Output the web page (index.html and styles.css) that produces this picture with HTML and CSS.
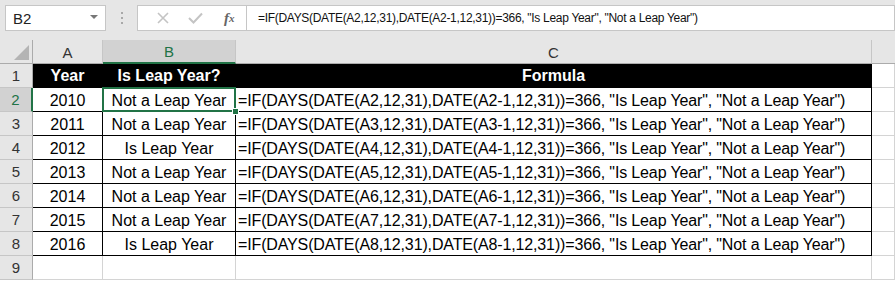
FILE: index.html
```html
<!DOCTYPE html>
<html lang="en">
<head>
    <meta charset="UTF-8">
    <title>Leap Year - Excel</title>
    <link rel="stylesheet" href="styles.css">
</head>
<body>

    <div class="toolbar">
        <div class="namebox">
            <span>B2</span>
            <span class="caret"></span>
        </div>
        <div class="grip"><i></i><i></i><i></i></div>
        <div class="fxbox">
            <span class="btn">
                <svg width="12" height="12" viewBox="0 0 12 12"><path d="M1 1 L11 11 M11 1 L1 11" stroke="#c4c4c4" stroke-width="1.6" fill="none"/></svg>
            </span>
            <span class="btn">
                <svg width="15" height="12" viewBox="0 0 15 12"><path d="M1 6 L5.5 10.5 L14 1.5" stroke="#c4c4c4" stroke-width="2" fill="none"/></svg>
            </span>
            <span class="btn fx"><i>f</i><small>x</small></span>
        </div>
        <div class="formula">=IF(DAYS(DATE(A2,12,31),DATE(A2-1,12,31))=366, "Is Leap Year", "Not a Leap Year")</div>
    </div>

    <div class="sheet">
        <!-- column headers -->
        <div class="corner"><span class="tri"></span></div>
        <div class="colhd">A</div>
        <div class="colhd active">B</div>
        <div class="colhd">C</div>
        <div class="colhd last"></div>

        <!-- row 1 -->
        <div class="rowhd">1</div>
        <div class="cell head">Year</div>
        <div class="cell head">Is Leap Year?</div>
        <div class="cell head">Formula</div>
        <div class="cell blank"></div>

        <div class="rowhd active">2</div>
        <div class="cell t">2010</div>
        <div class="cell t selected">Not a Leap Year<span class="handle"></span></div>
        <div class="cell t left">=IF(DAYS(DATE(A2,12,31),DATE(A2-1,12,31))=366, "Is Leap Year", "Not a Leap Year")</div>
        <div class="cell blank"></div>

        <div class="rowhd">3</div>
        <div class="cell t">2011</div>
        <div class="cell t">Not a Leap Year</div>
        <div class="cell t left">=IF(DAYS(DATE(A3,12,31),DATE(A3-1,12,31))=366, "Is Leap Year", "Not a Leap Year")</div>
        <div class="cell blank"></div>

        <div class="rowhd">4</div>
        <div class="cell t">2012</div>
        <div class="cell t">Is Leap Year</div>
        <div class="cell t left">=IF(DAYS(DATE(A4,12,31),DATE(A4-1,12,31))=366, "Is Leap Year", "Not a Leap Year")</div>
        <div class="cell blank"></div>

        <div class="rowhd">5</div>
        <div class="cell t">2013</div>
        <div class="cell t">Not a Leap Year</div>
        <div class="cell t left">=IF(DAYS(DATE(A5,12,31),DATE(A5-1,12,31))=366, "Is Leap Year", "Not a Leap Year")</div>
        <div class="cell blank"></div>

        <div class="rowhd">6</div>
        <div class="cell t">2014</div>
        <div class="cell t">Not a Leap Year</div>
        <div class="cell t left">=IF(DAYS(DATE(A6,12,31),DATE(A6-1,12,31))=366, "Is Leap Year", "Not a Leap Year")</div>
        <div class="cell blank"></div>

        <div class="rowhd">7</div>
        <div class="cell t">2015</div>
        <div class="cell t">Not a Leap Year</div>
        <div class="cell t left">=IF(DAYS(DATE(A7,12,31),DATE(A7-1,12,31))=366, "Is Leap Year", "Not a Leap Year")</div>
        <div class="cell blank"></div>

        <div class="rowhd">8</div>
        <div class="cell t">2016</div>
        <div class="cell t">Is Leap Year</div>
        <div class="cell t left">=IF(DAYS(DATE(A8,12,31),DATE(A8-1,12,31))=366, "Is Leap Year", "Not a Leap Year")</div>
        <div class="cell blank"></div>

        <div class="rowhd">9</div>
        <div class="cell blank"></div>
        <div class="cell blank"></div>
        <div class="cell blank"></div>
        <div class="cell blank"></div>
    </div>

</body>
</html>
```

FILE: styles.css
```css
body {
    margin: 0;
    background: #ffffff;
    font-family: "Liberation Sans", Arial, sans-serif;
    color: #000;
    overflow: hidden;
}

/* formula bar */
.toolbar {
    height: 40px;
    background: #e6e6e6;
    display: flex;
    align-items: flex-start;
    padding: 5px 0 0 5px;
    box-sizing: border-box;
}
.namebox {
    width: 101px;
    height: 26px;
    background: #fff;
    border: 1px solid #c6c6c6;
    box-sizing: border-box;
    display: flex;
    align-items: center;
    justify-content: space-between;
    padding: 0 7px 0 7px;
    font-size: 15px;
    color: #222;
}
.caret {
    width: 0;
    height: 0;
    border-left: 4px solid transparent;
    border-right: 4px solid transparent;
    border-top: 4px solid #777;
    margin-top: -3px;
}
.grip {
    width: 31px;
    height: 26px;
    display: flex;
    flex-direction: column;
    align-items: center;
    justify-content: center;
    gap: 3px;
}
.grip i {
    width: 2px;
    height: 2px;
    background: #a8a8a8;
}
.fxbox {
    width: 110px;
    height: 26px;
    background: #fff;
    border: 1px solid #c6c6c6;
    box-sizing: border-box;
    display: flex;
    align-items: center;
    padding-left: 8px;
}
.btn {
    width: 36px;
    display: flex;
    justify-content: center;
    align-items: center;
}
.fx {
    font-family: "Liberation Serif", serif;
    color: #666;
    font-size: 15px;
    font-weight: bold;
}
.fx i {
    font-style: italic;
}
.fx small {
    font-style: italic;
    font-size: 11px;
}
.formula {
    flex: 1;
    height: 26px;
    background: #fff;
    border: 1px solid #c6c6c6;
    border-left: none;
    box-sizing: border-box;
    padding-left: 11px;
    font-family: "Liberation Sans", sans-serif;
    font-size: 12px;
    letter-spacing: -0.3px;
    line-height: 24px;
    white-space: nowrap;
    overflow: hidden;
    color: #111;
}

/* grid */
.sheet {
    display: grid;
    grid-template-columns: 33px 70px 133px 636px 1fr;
    grid-auto-rows: 24px;
    font-size: 16px;
}
.sheet > div {
    box-sizing: border-box;
    border-right: 1px solid #d4d4d4;
    border-bottom: 1px solid #d4d4d4;
    display: flex;
    align-items: center;
    justify-content: center;
    white-space: nowrap;
    overflow: visible;
}
.corner, .colhd {
    background: #e6e6e6;
}
.sheet > .corner {
    border-right-color: #ababab;
    border-bottom-color: #ababab;
    position: relative;
}
.tri {
    position: absolute;
    right: 3px;
    bottom: 3px;
    width: 0;
    height: 0;
    border-left: 15px solid transparent;
    border-bottom: 15px solid #b4b4b4;
}
.sheet > .colhd {
    border-right-color: #c6c6c6;
    border-bottom-color: #ababab;
    font-size: 15px;
    color: #333;
    padding-top: 1px;
}
.sheet > .colhd.active {
    background: #d2d2d2;
    border-bottom: 2px solid #217346;
    color: #217346;
}
.sheet > .colhd.last {
    border-right: none;
}
.sheet > .rowhd {
    background: #e6e6e6;
    border-right-color: #ababab;
    border-bottom-color: #c6c6c6;
    font-size: 15px;
    color: #333;
}
.sheet > .rowhd.active {
    background: #d2d2d2;
    border-right: 2px solid #217346;
    color: #217346;
}
.sheet > .head {
    background: #000;
    color: #fff;
    font-weight: bold;
    border-right-color: #000;
    border-bottom-color: #000;
}
.sheet > .t {
    border-right-color: #000;
    border-bottom-color: #000;
    padding-top: 2px;
}
.sheet > .left {
    justify-content: flex-start;
    padding-left: 2px;
    letter-spacing: -0.14px;
}
.selected {
    position: relative;
}
.selected::after {
    content: "";
    position: absolute;
    left: -1px;
    top: -1px;
    right: -1px;
    bottom: -1px;
    border: 2px solid #217346;
}
.handle {
    position: absolute;
    right: -4px;
    bottom: -4px;
    width: 5px;
    height: 5px;
    background: #217346;
    border: 1px solid #fff;
    z-index: 2;
}
```
